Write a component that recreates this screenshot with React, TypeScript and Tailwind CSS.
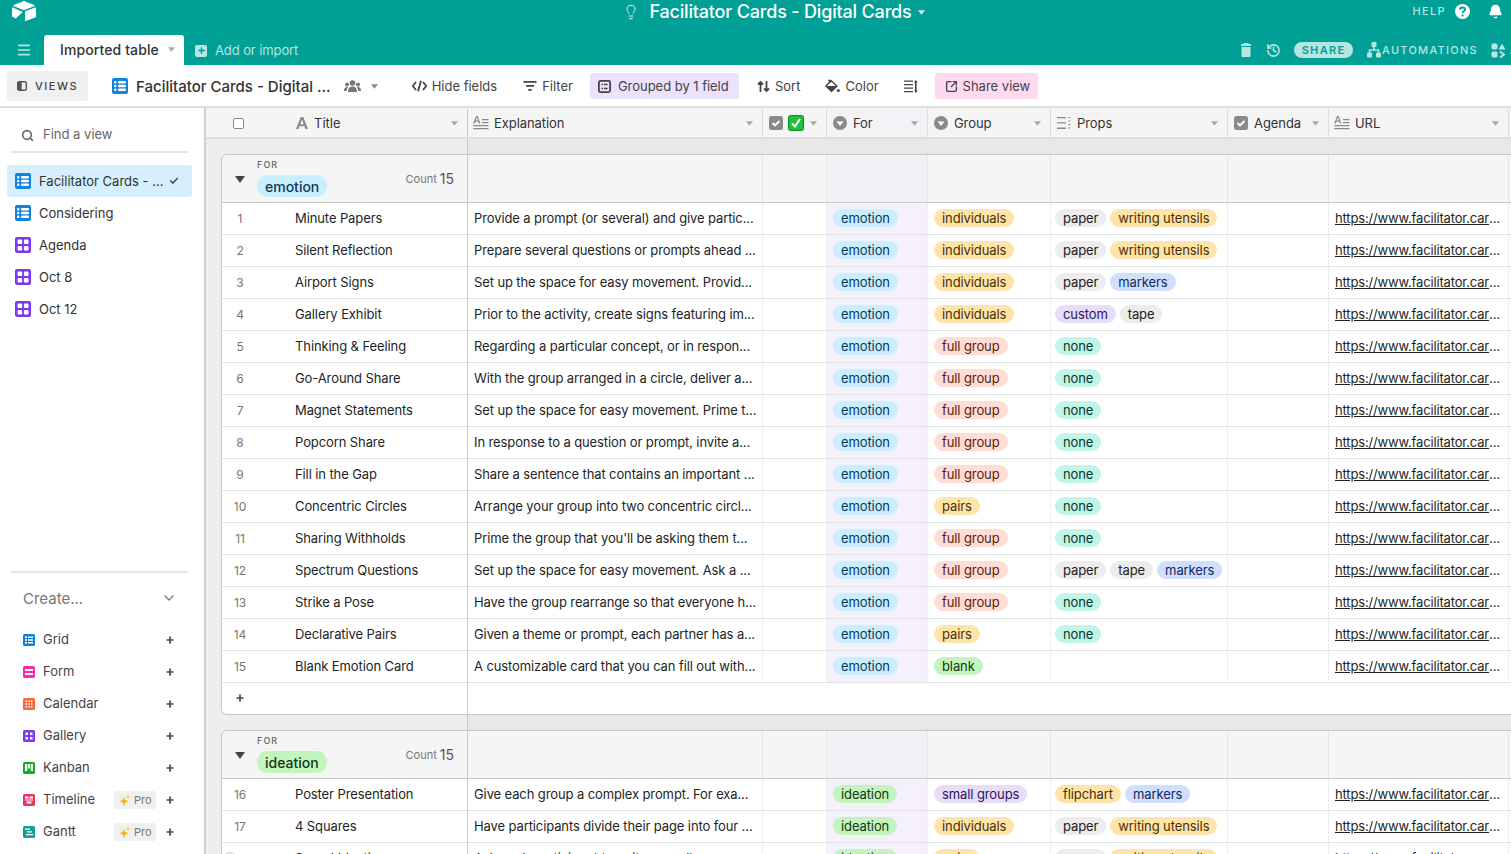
import { Bell, Check, ChevronDown, History, Lightbulb, Menu, Plus, Search, SquareArrowOutUpRight } from 'lucide-react';

const Caret = ({ className = 'text-[#a8a8a8]' }: { className?: string }) => (
  <svg width="7" height="5" viewBox="0 0 8 5" className={className}>
    <path d="M0 0h8L4 5z" fill="currentColor" />
  </svg>
);

const GridIcon = ({ size = 16, color = '#1283da' }: { size?: number; color?: string }) => (
  <svg width={size} height={size} viewBox="0 0 16 16">
    <rect width="16" height="16" rx="2" fill={color} />
    <g fill="#fff">
      <rect x="2" y="3" width="2.5" height="2.4" rx="1" />
      <rect x="6" y="3" width="8" height="2.4" rx="1" />
      <rect x="2" y="6.8" width="2.5" height="2.4" rx="1" />
      <rect x="6" y="6.8" width="8" height="2.4" rx="1" />
      <rect x="2" y="10.6" width="2.5" height="2.4" rx="1" />
      <rect x="6" y="10.6" width="8" height="2.4" rx="1" />
    </g>
  </svg>
);

const GalleryIcon = ({ size = 16 }: { size?: number }) => (
  <svg width={size} height={size} viewBox="0 0 16 16">
    <rect width="16" height="16" rx="2" fill="#7c39ed" />
    <g fill="#fff">
      <rect x="2.5" y="2.5" width="4.6" height="4.6" rx="1" />
      <rect x="8.9" y="2.5" width="4.6" height="4.6" rx="1" />
      <rect x="2.5" y="8.9" width="4.6" height="4.6" rx="1" />
      <rect x="8.9" y="8.9" width="4.6" height="4.6" rx="1" />
    </g>
  </svg>
);

const Logo = () => (
  <svg width="24" height="21" viewBox="0 0 24 21">
    <path d="M10.7.4 1.8 4.1c-.5.2-.5.9 0 1.1l9 3.6c.8.3 1.6.3 2.4 0l9-3.6c.5-.2.5-.9 0-1.1L13.3.4c-.8-.4-1.8-.4-2.6 0z" fill="#fff" />
    <path d="M13 10.700v8.900c0 .4.4.7.8.5l9.900-3.800c.2-.1.3-.3.3-.5V6.900c0-.4-.4-.7-.8-.5l-9.900 3.800c-.2.100-.3.300-.3.500z" fill="#fff" />
    <path d="M10.700 11 .9 6.400C.5 6.200 0 6.500 0 7v8.100c0 .3.100.5.400.6l3.500 1.900 6.800-6.600z" fill="#fff" />
  </svg>
);

const HeaderType = ({ type }: { type: string }) => {
  if (type === 'title') {
    return (
      <svg width="14" height="14" viewBox="0 0 14 14" className="text-[#8a8a8a]">
        <path d="M5.700 1h2.600L13 13h-2.600l-1-2.800H4.600l-1 2.800H1zM5.300 8.200h3.400L7 3.600z" fill="currentColor" />
      </svg>
    );
  }
  if (type === 'text') {
    return (
      <svg width="16" height="14" viewBox="0 0 16 14" className="text-[#8a8a8a]">
        <path d="M3 0h1.600l2.800 7.500H6l-.6-1.800H2.200L1.600 7.500H.2zM2.600 4.500h2.400L3.800 1.300zM9 3h6.500v1.200H9zM9 6h6.500v1.200H9zM.3 9h15.200v1.300H.3zM.3 12h15.200v1.300H.3z" fill="currentColor" />
      </svg>
    );
  }
  if (type === 'check') {
    return (
      <svg width="14" height="14" viewBox="0 0 14 14" className="text-[#8a8a8a]">
        <rect width="14" height="14" rx="2.500" fill="currentColor" />
        <path d="m3.500 7 2.500 2.500 4.500-4.500" stroke="#fff" strokeWidth="1.800" fill="none" />
      </svg>
    );
  }
  if (type === 'select') {
    return (
      <svg width="14" height="14" viewBox="0 0 14 14" className="text-[#8a8a8a]">
        <circle cx="7" cy="7" r="7" fill="currentColor" />
        <path d="M3.500 5.500h7L7 10z" fill="#fff" />
      </svg>
    );
  }
  return (
    <svg width="14" height="14" viewBox="0 0 14 14" className="text-[#8a8a8a]">
      <path d="M0 1h9v1.300H0zM0 6.300h9v1.300H0zM0 11.600h9v1.300H0zM11 1h2.500l-1.250 1.500zM11 4.500h2.500L12.250 6zM11 8h2.500l-1.250 1.500zM11 11.500h2.500L12.250 13z" fill="currentColor" />
    </svg>
  );
};

const pillColors: Record<string, string> = {
  emotion: 'bg-[#c9eeff] text-[#0b3a55]',
  ideation: 'bg-[#c3f4bd] text-[#0f3a10]',
  individuals: 'bg-[#ffe4a9] text-[#4a3000]',
  pairs: 'bg-[#ffe4a9] text-[#4a3000]',
  'full group': 'bg-[#ffdcd4] text-[#5c1a10]',
  'small groups': 'bg-[#e8dcfb] text-[#2c1458]',
  blank: 'bg-[#c3f4bd] text-[#0f3a10]',
  paper: 'bg-[#ececec] text-[#222]',
  tape: 'bg-[#ececec] text-[#222]',
  'writing utensils': 'bg-[#ffe4a9] text-[#4a3000]',
  flipchart: 'bg-[#ffe4a9] text-[#4a3000]',
  markers: 'bg-[#cfdffe] text-[#132a58]',
  custom: 'bg-[#e8dcfb] text-[#2c1458]',
  none: 'bg-[#c1f5e9] text-[#06392c]',
};

const Pill = ({ label }: { label: string }) => (
  <span className={`mb-[1px] inline-flex h-[18px] items-center rounded-full px-[8px] text-[13px] leading-[18px] tracking-[-0.1px] whitespace-nowrap ${pillColors[label]}`}>
    {label}
  </span>
);

type Row = { n: number; title: string; text: string; tag: string; group: string; props: string[] };

const emotionRows: Row[] = [
  { n: 1, title: 'Minute Papers', text: 'Provide a prompt (or several) and give partic...', tag: 'emotion', group: 'individuals', props: ['paper', 'writing utensils'] },
  { n: 2, title: 'Silent Reflection', text: 'Prepare several questions or prompts ahead ...', tag: 'emotion', group: 'individuals', props: ['paper', 'writing utensils'] },
  { n: 3, title: 'Airport Signs', text: 'Set up the space for easy movement. Provid...', tag: 'emotion', group: 'individuals', props: ['paper', 'markers'] },
  { n: 4, title: 'Gallery Exhibit', text: 'Prior to the activity, create signs featuring im...', tag: 'emotion', group: 'individuals', props: ['custom', 'tape'] },
  { n: 5, title: 'Thinking & Feeling', text: 'Regarding a particular concept, or in respon...', tag: 'emotion', group: 'full group', props: ['none'] },
  { n: 6, title: 'Go-Around Share', text: 'With the group arranged in a circle, deliver a...', tag: 'emotion', group: 'full group', props: ['none'] },
  { n: 7, title: 'Magnet Statements', text: 'Set up the space for easy movement. Prime t...', tag: 'emotion', group: 'full group', props: ['none'] },
  { n: 8, title: 'Popcorn Share', text: 'In response to a question or prompt, invite a...', tag: 'emotion', group: 'full group', props: ['none'] },
  { n: 9, title: 'Fill in the Gap', text: 'Share a sentence that contains an important ...', tag: 'emotion', group: 'full group', props: ['none'] },
  { n: 10, title: 'Concentric Circles', text: 'Arrange your group into two concentric circl...', tag: 'emotion', group: 'pairs', props: ['none'] },
  { n: 11, title: 'Sharing Withholds', text: "Prime the group that you'll be asking them t...", tag: 'emotion', group: 'full group', props: ['none'] },
  { n: 12, title: 'Spectrum Questions', text: 'Set up the space for easy movement. Ask a ...', tag: 'emotion', group: 'full group', props: ['paper', 'tape', 'markers'] },
  { n: 13, title: 'Strike a Pose', text: 'Have the group rearrange so that everyone h...', tag: 'emotion', group: 'full group', props: ['none'] },
  { n: 14, title: 'Declarative Pairs', text: 'Given a theme or prompt, each partner has a...', tag: 'emotion', group: 'pairs', props: ['none'] },
  { n: 15, title: 'Blank Emotion Card', text: 'A customizable card that you can fill out with...', tag: 'emotion', group: 'blank', props: [] },
];

const ideationRows: Row[] = [
  { n: 16, title: 'Poster Presentation', text: 'Give each group a complex prompt. For exa...', tag: 'ideation', group: 'small groups', props: ['flipchart', 'markers'] },
  { n: 17, title: '4 Squares', text: 'Have participants divide their page into four ...', tag: 'ideation', group: 'individuals', props: ['paper', 'writing utensils'] },
  { n: 18, title: 'Speed Ideating', text: 'Ask each participant to write a small...', tag: 'ideation', group: 'pairs', props: ['paper', 'writing utensils'] },
];

const RightCells = ({ row }: { row: Row }) => (
  <>
    <div className="flex w-[295px] items-center border-r border-[#efefef] pl-[6px] text-[13px] tracking-[-0.11px] whitespace-nowrap text-[#1d1f25]">{row.text}</div>
    <div className="w-[64px] border-r border-[#efefef]" />
    <div className="flex w-[101px] items-center border-r border-[#efefef] bg-[#f5f0fc] pl-[6px]"><Pill label={row.tag} /></div>
    <div className="flex w-[123px] items-center border-r border-[#efefef] pl-[6px]"><Pill label={row.group} /></div>
    <div className="flex w-[177px] items-center gap-[4px] border-r border-[#efefef] pl-[4px]">
      {row.props.map((p) => <Pill key={p} label={p} />)}
    </div>
    <div className="w-[101px] border-r border-[#efefef]" />
    <div className="flex w-[180px] items-center border-r border-[#efefef] pl-[6px] text-[13px] tracking-[-0.16px] whitespace-nowrap text-[#1d1f25]">
      <span className="underline">https://www.facilitator.car</span>...
    </div>
  </>
);

const DataRow = ({ row }: { row: Row }) => (
  <div className="flex h-[32px] shrink-0">
    <div className="w-[15px] bg-[#eeeeee]" />
    <div className="flex w-[247px] items-center border-r border-b border-l border-r-[#c8c8c8] border-b-[#dfe3e4] border-l-[#c8c8c8] bg-white">
      <span className="w-[36px] text-center text-[12px] tracking-[-0.1px] text-[#757575]">{row.n}</span>
      <span className="ml-[37px] text-[13px] tracking-[-0.1px] text-[#1d1f25]">{row.title}</span>
    </div>
    <div className="flex flex-1 border-b border-[#dfe3e4] bg-white">
      <RightCells row={row} />
    </div>
  </div>
);

const GroupHead = ({ name }: { name: string }) => (
  <div className="flex h-[49px] shrink-0">
    <div className="w-[15px] bg-[#eeeeee]" />
    <div className="flex w-[247px] items-start rounded-tl-[6px] border-t border-r border-b border-l border-[#c8c8c8] bg-[#f5f5f5]">
      <div className="mt-[21px] ml-[13px]">
        <svg width="10" height="7" viewBox="0 0 10 7" className="text-[#444]">
          <path d="M0 0h10L5 7z" fill="currentColor" />
        </svg>
      </div>
      <div className="ml-[12px] flex flex-col items-start">
        <span className="mt-[4px] text-[9px] leading-[12px] font-medium tracking-[0.12em] text-[#666]">FOR</span>
        <span className={`mt-[4px] inline-flex h-[22px] items-center rounded-full px-[8px] text-[14px] font-medium ${pillColors[name]}`}>{name}</span>
      </div>
      <div className="mt-[14px] mr-[13px] ml-auto flex items-center gap-[3px]">
        <span className="text-[11px] text-[#777]">Count</span>
        <span className="text-[14px] leading-[20px] text-[#555]">15</span>
      </div>
    </div>
    <div className="flex flex-1 border-t border-b border-[#c8c8c8] bg-[#f5f5f5]">
      <div className="w-[295px] border-r border-[#e6e6e6]" />
      <div className="w-[64px] border-r border-[#e6e6e6]" />
      <div className="w-[101px] border-r border-[#e6e6e6] bg-[#f3f0f7]" />
      <div className="w-[123px] border-r border-[#e6e6e6]" />
      <div className="w-[177px] border-r border-[#e6e6e6]" />
      <div className="w-[101px] border-r border-[#e6e6e6]" />
      <div className="w-[180px] border-r border-[#e6e6e6]" />
    </div>
  </div>
);

const Spacer = () => (
  <div className="flex h-[15px] shrink-0">
    <div className="w-[262px] border-r border-[#c8c8c8] bg-[#eeeeee]" />
    <div className="flex-1 bg-[#e8e8e8]" />
  </div>
);

const Column = ({ w, type, label, purple }: { w: string; type: string; label: string; purple?: boolean }) => (
  <div className={`flex items-center border-r border-[#dcdcdc] pr-[9px] ${type === 'text' ? 'gap-[5px] pl-[5px]' : 'gap-[6px] pl-[6px]'} ${w} ${purple ? 'bg-[#f4f2f7]' : ''}`}>
    <HeaderType type={type} />
    <span className="mt-[1px] text-[13px] tracking-[-0.08px] text-[#333]">{label}</span>
    <Caret className="ml-auto text-[#a8a8a8]" />
  </div>
);

const ToolButton = ({ icon, label, className = '' }: { icon: React.ReactNode; label: string; className?: string }) => (
  <div className={`flex h-[26px] items-center gap-[5px] rounded-[3px] px-[8px] text-[13px] whitespace-nowrap text-[#444] ${className}`}>
    {icon}
    <span className="mt-[2px]">{label}</span>
  </div>
);

const createItems = [
  { label: 'Grid', color: '#1283da', kind: 'grid' },
  { label: 'Form', color: '#f82bb5', kind: 'form' },
  { label: 'Calendar', color: '#f7653b', kind: 'calendar' },
  { label: 'Gallery', color: '#7c39ed', kind: 'gallery' },
  { label: 'Kanban', color: '#11af22', kind: 'kanban' },
  { label: 'Timeline', color: '#ef3061', kind: 'timeline', pro: true },
  { label: 'Gantt', color: '#0f9f96', kind: 'gantt', pro: true },
];

const CreateIcon = ({ kind, color }: { kind: string; color: string }) => (
  <svg width="12" height="12" viewBox="0 0 12 12">
    <rect width="12" height="12" rx="1.500" fill={color} />
    <g fill="#fff">
      {kind === 'grid' && <path d="M2 2.500h2v1.500H2zM5 2.500h5v1.500H5zM2 5.300h2v1.500H2zM5 5.300h5v1.500H5zM2 8h2v1.500H2zM5 8h5v1.500H5z" />}
      {kind === 'form' && <path d="M2 3h8v2H2zM2 7h8v2H2z" />}
      {kind === 'calendar' && <path d="M2.500 2.500h1.600v1.600H2.500zM5.200 2.500h1.600v1.600H5.200zM7.900 2.500h1.600v1.600H7.900zM2.500 5.200h1.600v1.600H2.500zM5.200 5.200h1.600v1.600H5.200zM7.900 5.200h1.600v1.600H7.900zM2.500 7.900h1.600v1.600H2.500zM5.200 7.900h1.600v1.600H5.200zM7.900 7.900h1.600v1.600H7.900z" />}
      {kind === 'gallery' && <path d="M2.500 2.500h2.500V5H2.500zM7 2.500h2.500V5H7zM2.500 7h2.500v2.500H2.500zM7 7h2.500v2.500H7z" />}
      {kind === 'kanban' && <path d="M2 2h2.200v7H2zM4.900 2h2.200v4.500H4.900zM7.800 2H10v7H7.800z" />}
      {kind === 'timeline' && <path d="M2 2.500h3.500v2H2zM6.500 2.500H10v2H6.500zM2 5.500h8v1H2zM3.500 7.500h5v2h-5z" />}
      {kind === 'gantt' && <path d="M2 2.500h5v1.300H2zM4 5.300h5v1.300H4zM3 8h7v1.300H3z" />}
    </g>
  </svg>
);

const ProBadge = () => (
  <div className="mr-[9px] flex h-[18px] w-[42px] items-center gap-[4px] rounded-[2px] bg-[#f0f0f0] pl-[5px] text-[11px] text-[#777]">
    <svg width="11" height="11" viewBox="0 0 11 11">
      <path d="M5 2 6.200 5 9.500 6.200 6.200 7.400 5 11 3.800 7.400.5 6.200 3.800 5z M9 0l.5 1.300L11 1.800l-1.500.5L9 3.500l-.5-1.200L7 1.800l1.500-.5z" fill="#fcb400" />
    </svg>
    Pro
  </div>
);

const Sidebar = () => (
  <aside className="flex w-[206px] shrink-0 flex-col border-r-2 border-[#d0d0d0] bg-white">
    <div className="mt-[11px] mr-[16px] ml-[11px] flex h-[34px] items-center gap-[9px] border-b-2 border-[#e5e5e5] pl-[10px] text-[13px] text-[#666]">
      <Search size={13} strokeWidth={3} className="text-[#666]" />
      <span>Find a view</span>
    </div>
    <div className="mt-[12px] flex flex-col px-[7px]">
      <div className="flex h-[32px] w-[185px] items-center rounded-[3px] bg-[#d5f0fc] pr-[13px] pl-[8px] text-[13px] text-[#333]">
        <GridIcon />
        <span className="mt-[1px] ml-[8px]">Facilitator Cards - ...</span>
        <Check size={10} strokeWidth={4} className="ml-auto text-[#555]" />
      </div>
      <div className="flex h-[32px] items-center px-[8px] text-[13px] text-[#333]">
        <GridIcon />
        <span className="mt-[1px] ml-[8px]">Considering</span>
      </div>
      {['Agenda', 'Oct 8', 'Oct 12'].map((v) => (
        <div key={v} className="flex h-[32px] items-center px-[8px] text-[13px] text-[#333]">
          <GalleryIcon />
          <span className="mt-[1px] ml-[8px]">{v}</span>
        </div>
      ))}
    </div>
    <div className="mt-auto mr-[16px] ml-[11px] flex flex-col border-t-2 border-[#e5e5e5] pb-[6px]">
      <div className="mt-[14px] mb-[15px] flex h-[22px] items-center justify-between pr-[11px] pl-[12px] text-[15px] text-[#777]">
        <span className="mt-[2px]">Create...</span>
        <ChevronDown size={16} className="text-[#777]" />
      </div>
      {createItems.map((item) => (
        <div key={item.label} className="flex h-[32px] items-center pr-[13px] pl-[12px] text-[13px] text-[#444]">
          <CreateIcon kind={item.kind} color={item.color} />
          <span className="ml-[8px]">{item.label}</span>
          <div className="ml-auto flex items-center">
            {item.pro && <ProBadge />}
            <Plus size={10} strokeWidth={4} className="text-[#444]" />
          </div>
        </div>
      ))}
    </div>
  </aside>
);

export default function App() {
  return (
    <div className="flex h-[854px] w-[1511px] flex-col overflow-hidden bg-white font-['Inter',sans-serif]">
      <header className="h-[65px] shrink-0 bg-[#00a096] text-white">
        <div className="relative flex h-[35px] items-start justify-center pl-[37px]">
          <div className="absolute top-[1px] left-[12px]"><Logo /></div>
          <div className="flex items-center">
            <Lightbulb size={16} strokeWidth={1.500} className="text-[#e0f5f3]" />
            <span className="ml-[10px] text-[18px] leading-[23px] font-medium tracking-[-0.18px]">Facilitator Cards - Digital Cards</span>
            <Caret className="mt-[2px] ml-[6px] text-[#cdeeea]" />
          </div>
          <div className="absolute top-[3px] right-[8px] flex items-center">
            <span className="text-[11px] font-medium tracking-[0.12em] text-[#b5e6e1]">HELP</span>
            <svg width="15" height="15" viewBox="0 0 15 15" className="ml-[9px]">
              <circle cx="7.500" cy="7.500" r="7.500" fill="#fff" />
              <path d="M5 5.800c0-1.500 1.100-2.300 2.500-2.300S10 4.300 10 5.600c0 1.700-2.500 1.700-2.500 3.400" stroke="#00a096" strokeWidth="1.900" fill="none" />
              <circle cx="7.500" cy="11.400" r="1.100" fill="#00a096" />
            </svg>
            <Bell size={15} fill="currentColor" className="ml-[18px] text-white" />
          </div>
        </div>
        <div className="flex h-[30px] items-center">
          <Menu size={16} strokeWidth={2.500} className="ml-[16px] text-[#b5e6e1]" />
          <div className="ml-[12px] flex h-[30px] w-[140px] items-center rounded-t-[3px] bg-white pb-[1px] pl-[16px] text-[14px] font-medium tracking-[0.1px] text-[#333]">
            Imported table
            <Caret className="ml-[9px] text-[#a8a8a8]" />
          </div>
          <div className="ml-[11px] flex items-center gap-[8px] pt-[1px] text-[13px] tracking-[-0.1px] text-[#b5e6e1]">
            <div className="flex h-[12px] w-[12px] items-center justify-center rounded-[2px] bg-[#b5e6e1]">
              <Plus size={9} strokeWidth={4} className="text-[#00a096]" />
            </div>
            Add or import
          </div>
          <div className="ml-auto -mr-[33px] flex items-center text-[#b5e6e1]">
            <svg width="10" height="14" viewBox="0 0 10 14">
              <path d="M2.500 0h5v1H10v2H0V1h2.500zM.5 4h9v9c0 .6-.5 1-1 1h-7c-.5 0-1-.4-1-1z" fill="currentColor" />
            </svg>
            <History size={15} strokeWidth={2.500} className="ml-[15px]" />
            <span className="ml-[13px] flex h-[16px] w-[59px] items-center justify-center rounded-full bg-[#b5e6e1] text-[11px] font-semibold tracking-[0.12em] text-[#00a096]">SHARE</span>
            <svg width="14" height="16" viewBox="0 0 14 16" className="ml-[14px]">
              <rect x="4.500" y="0" width="5" height="5" rx="1" fill="currentColor" />
              <rect x="0" y="10.500" width="5" height="5" rx="1" fill="currentColor" />
              <rect x="9" y="10.500" width="5" height="5" rx="1" fill="currentColor" />
              <path d="M7 5v3M2.500 11V8h9v3" stroke="currentColor" strokeWidth="1.600" fill="none" />
            </svg>
            <span className="ml-[1px] text-[11px] font-medium tracking-[0.115em]">AUTOMATIONS</span>
            <svg width="15" height="15" viewBox="0 0 15 15" className="ml-[13px]">
              <circle cx="3.500" cy="3.500" r="3.200" fill="currentColor" />
              <path d="M11 .5l3.500 6h-7z" fill="currentColor" />
              <rect x=".5" y="8.500" width="6" height="6" rx="1.500" fill="currentColor" />
              <path d="m9 8.500 4 3-4 3" stroke="currentColor" strokeWidth="2" fill="none" />
            </svg>
            <span className="ml-[4px] text-[11px] font-medium tracking-[0.115em]">APPS</span>
          </div>
        </div>
      </header>

      <div className="flex h-[43px] shrink-0 items-center border-b-2 border-[#dedede] bg-white pt-[1px]">
        <div className="ml-[7px] flex h-[30px] w-[81px] items-center justify-center gap-[8px] rounded-[3px] bg-[#f0f0f0]">
          <svg width="10" height="10" viewBox="0 0 10 10" className="text-[#555]">
            <rect x=".7" y=".7" width="8.600" height="8.600" rx="1.500" stroke="currentColor" strokeWidth="1.400" fill="none" />
            <rect x=".7" y=".7" width="4" height="8.600" fill="currentColor" />
          </svg>
          <span className="text-[11px] font-medium tracking-[0.14em] text-[#444]">VIEWS</span>
        </div>
        <div className="ml-[24px]"><GridIcon /></div>
        <span className="mt-[2px] ml-[8px] text-[15px] font-medium text-[#333]">Facilitator Cards - Digital ...</span>
        <svg width="17" height="12" viewBox="0 0 17 12" className="ml-[13px] text-[#777]">
          <circle cx="8.500" cy="3" r="2.800" fill="currentColor" />
          <circle cx="3" cy="4.500" r="2" fill="currentColor" />
          <circle cx="14" cy="4.500" r="2" fill="currentColor" />
          <path d="M4 12c0-4 2-5.500 4.500-5.500S13 8 13 12zM0 11c0-3 1-4 3-4 .5 0 .7 0 1 .2C3 8.500 2.800 10 2.800 11zM17 11c0-3-1-4-3-4-.5 0-.7 0-1 .2 1 1.300 1.200 2.800 1.200 3.800z" fill="currentColor" />
        </svg>
        <Caret className="ml-[10px] text-[#888]" />
        <div className="ml-[26px] flex items-center">
          <ToolButton
            label="Hide fields"
            icon={
              <svg width="15" height="12" viewBox="0 0 15 12" className="text-[#444]">
                <path d="M4 2 .8 6 4 10M11 2l3.200 4L11 10M9 .8 6 11.200" stroke="currentColor" strokeWidth="1.800" fill="none" />
              </svg>
            }
          />
          <ToolButton
            label="Filter"
            className="ml-[10px]"
            icon={
              <svg width="14" height="12" viewBox="0 0 14 12" className="text-[#444]">
                <path d="M.5 1h13v1.800H.5zM3 5h8v1.800H3zM5.300 9h3.400v1.800H5.300z" fill="currentColor" />
              </svg>
            }
          />
          <ToolButton
            label="Grouped by 1 field"
            className="ml-[9px] w-[149px] gap-[7px] bg-[#ede2fe] tracking-[-0.03px]"
            icon={
              <svg width="13" height="13" viewBox="0 0 13 13" className="text-[#444]">
                <rect x=".9" y=".9" width="11.200" height="11.200" rx="1.500" stroke="currentColor" strokeWidth="1.800" fill="none" />
                <path d="M3.500 3.800h1.500v1.500H3.500zM6 3.800h3.500v1.500H6zM3.500 7.700h1.500v1.500H3.500zM6 7.700h3.500v1.500H6z" fill="currentColor" />
              </svg>
            }
          />
          <ToolButton
            label="Sort"
            className="ml-[10px]"
            icon={
              <svg width="13" height="13" viewBox="0 0 13 13" className="text-[#444]">
                <path d="M3.500 12V2M1 4.500 3.500 2 6 4.500M9.500 1v10M7 8.500 9.500 11 12 8.500" stroke="currentColor" strokeWidth="1.800" fill="none" />
              </svg>
            }
          />
          <ToolButton
            label="Color"
            className="ml-[9px]"
            icon={
              <svg width="15" height="14" viewBox="0 0 15 14" className="text-[#444]">
                <path d="M6 1.500 12 7l-5.500 5.500L1 7z" stroke="currentColor" strokeWidth="1.400" fill="none" />
                <path d="M1 7h11l-5.500 5.500z" fill="currentColor" />
                <path d="M3.500 .8 6 3.500" stroke="currentColor" strokeWidth="1.400" />
                <circle cx="13.300" cy="11.500" r="1.500" fill="currentColor" />
              </svg>
            }
          />
          <svg width="14" height="13" viewBox="0 0 14 13" className="ml-[17px] text-[#444]">
            <path d="M0 .5h9v1.200H0zM0 4h9v1.200H0zM0 7.500h9v1.200H0zM0 11h9v1.200H0z" fill="currentColor" />
            <path d="M11.800 1v11" stroke="currentColor" strokeWidth="1.600" />
            <path d="M10 2.500h3.600L11.800 0zM10 10.500h3.600L11.800 13z" fill="currentColor" />
          </svg>
          <ToolButton
            label="Share view"
            className="ml-[17px] w-[103px] bg-[#ffd9f0] pr-[6px] pl-[10px]"
            icon={<SquareArrowOutUpRight size={13} strokeWidth={2.500} className="text-[#444]" />}
          />
        </div>
      </div>

      <div className="flex min-h-0 flex-1">
        <Sidebar />
        <main className="relative flex min-w-0 flex-1 flex-col bg-[#eeeeee]">
          <div className="flex h-[31px] shrink-0 border-b-2 border-[#dedede] bg-[#f5f5f5] pt-[1px]">
            <div className="flex w-[262px] items-center border-r border-[#c8c8c8] pr-[9px]">
              <span className="ml-[27px] h-[11px] w-[11px] rounded-[2px] border border-[#8a8a8a] bg-white" />
              <span className="ml-[51px]"><HeaderType type="title" /></span>
              <span className="mt-[1px] ml-[5px] text-[13px] text-[#333]">Title</span>
              <Caret className="ml-auto text-[#a8a8a8]" />
            </div>
            <Column w="w-[295px]" type="text" label="Explanation" />
            <div className="flex w-[64px] items-center border-r border-[#dcdcdc] pr-[9px] pl-[6px]">
              <HeaderType type="check" />
              <svg width="16" height="16" viewBox="0 0 16 16" className="ml-[5px]">
                <rect x=".5" y=".5" width="15" height="15" rx="2" fill="#22c03c" stroke="#0f8a24" />
                <path d="m4 8.500 3 3 5-7.500" stroke="#fff" strokeWidth="2" fill="none" />
              </svg>
              <Caret className="ml-auto text-[#a8a8a8]" />
            </div>
            <Column w="w-[101px]" type="select" label="For" purple />
            <Column w="w-[123px]" type="select" label="Group" />
            <Column w="w-[177px]" type="list" label="Props" />
            <Column w="w-[101px]" type="check" label="Agenda" />
            <Column w="w-[180px]" type="text" label="URL" />
          </div>
          <Spacer />
          <GroupHead name="emotion" />
          {emotionRows.map((r) => <DataRow key={r.n} row={r} />)}
          <div className="flex h-[32px] shrink-0">
            <div className="w-[15px] bg-[#eeeeee]" />
            <div className="flex w-[247px] items-center rounded-bl-[6px] border-r border-b border-l border-[#c8c8c8] bg-white pb-[2px] pl-[13px]">
              <Plus size={10} strokeWidth={4} className="text-[#444]" />
            </div>
            <div className="flex-1 border-b border-[#c8c8c8] bg-white" />
          </div>
          <Spacer />
          <GroupHead name="ideation" />
          {ideationRows.map((r) => <DataRow key={r.n} row={r} />)}
          <div className="absolute bottom-[-14px] left-[16px] h-[16px] w-[16px] rounded-full border border-[#cccccc] bg-white" />
        </main>
      </div>
    </div>
  );
}
